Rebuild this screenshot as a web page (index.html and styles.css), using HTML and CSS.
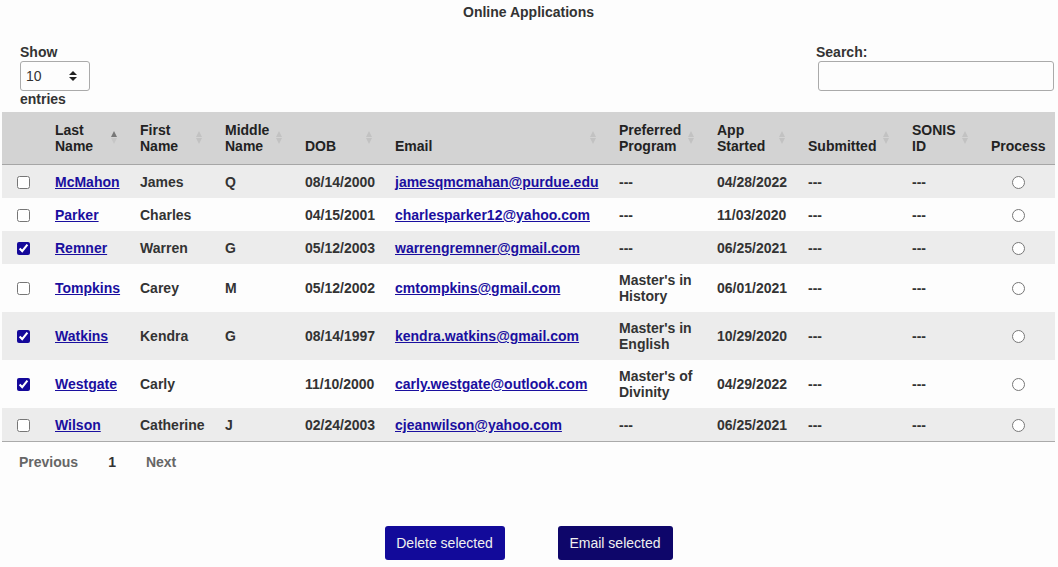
FILE: index.html
```html
<!DOCTYPE html>
<html lang="en">
<head>
<meta charset="utf-8">
<title>Online Applications</title>
<link rel="stylesheet" href="styles.css">
</head>
<body>
<div class="page">
  <h1 class="title">Online Applications</h1>

  <div class="controls">
    <div class="length">
      <div class="lbl">Show</div>
      <div class="select-wrap">
        <select class="select"><option>10</option><option>25</option><option>50</option></select>
        <svg class="select-arrows" width="8" height="12" viewBox="0 0 8 12"><path d="M0 5L4 1L8 5Z M0 7L4 11L8 7Z" fill="#222"/></svg>
      </div>
      <div class="lbl">entries</div>
    </div>
    <div class="search">
      <div class="lbl">Search:</div>
      <input class="search-input" type="search">
    </div>
  </div>

  <table class="grid">
    <colgroup>
      <col class="c-chk"><col class="c-last"><col class="c-first"><col class="c-mid"><col class="c-dob"><col class="c-email"><col class="c-prog"><col class="c-app"><col class="c-sub"><col class="c-sonis"><col class="c-proc">
    </colgroup>
    <thead>
      <tr>
        <th></th>
        <th class="sort">Last<br>Name<span class="arrows active"><i class="up"></i><i class="dn"></i></span></th>
        <th class="sort">First<br>Name<span class="arrows"><i class="up"></i><i class="dn"></i></span></th>
        <th class="sort">Middle<br>Name<span class="arrows"><i class="up"></i><i class="dn"></i></span></th>
        <th class="sort">DOB<span class="arrows"><i class="up"></i><i class="dn"></i></span></th>
        <th class="sort">Email<span class="arrows"><i class="up"></i><i class="dn"></i></span></th>
        <th class="sort">Preferred<br>Program<span class="arrows"><i class="up"></i><i class="dn"></i></span></th>
        <th class="sort">App<br>Started<span class="arrows"><i class="up"></i><i class="dn"></i></span></th>
        <th class="sort">Submitted<span class="arrows"><i class="up"></i><i class="dn"></i></span></th>
        <th class="sort">SONIS<br>ID<span class="arrows"><i class="up"></i><i class="dn"></i></span></th>
        <th>Process</th>
      </tr>
    </thead>
    <tbody>
      <tr class="odd one">
        <td class="chk"><input type="checkbox"></td>
        <td><a href="#">McMahon</a></td><td>James</td><td>Q</td><td>08/14/2000</td>
        <td><a href="#">jamesqmcmahan@purdue.edu</a></td><td>---</td><td>04/28/2022</td><td>---</td><td>---</td>
        <td class="proc"><input type="radio" name="p1"></td>
      </tr>
      <tr class="one">
        <td class="chk"><input type="checkbox"></td>
        <td><a href="#">Parker</a></td><td>Charles</td><td></td><td>04/15/2001</td>
        <td><a href="#">charlesparker12@yahoo.com</a></td><td>---</td><td>11/03/2020</td><td>---</td><td>---</td>
        <td class="proc"><input type="radio" name="p2"></td>
      </tr>
      <tr class="odd one">
        <td class="chk"><input type="checkbox" checked></td>
        <td><a href="#">Remner</a></td><td>Warren</td><td>G</td><td>05/12/2003</td>
        <td><a href="#">warrengremner@gmail.com</a></td><td>---</td><td>06/25/2021</td><td>---</td><td>---</td>
        <td class="proc"><input type="radio" name="p3"></td>
      </tr>
      <tr>
        <td class="chk"><input type="checkbox"></td>
        <td><a href="#">Tompkins</a></td><td>Carey</td><td>M</td><td>05/12/2002</td>
        <td><a href="#">cmtompkins@gmail.com</a></td><td>Master's in History</td><td>06/01/2021</td><td>---</td><td>---</td>
        <td class="proc"><input type="radio" name="p4"></td>
      </tr>
      <tr class="odd">
        <td class="chk"><input type="checkbox" checked></td>
        <td><a href="#">Watkins</a></td><td>Kendra</td><td>G</td><td>08/14/1997</td>
        <td><a href="#">kendra.watkins@gmail.com</a></td><td>Master's in English</td><td>10/29/2020</td><td>---</td><td>---</td>
        <td class="proc"><input type="radio" name="p5"></td>
      </tr>
      <tr>
        <td class="chk"><input type="checkbox" checked></td>
        <td><a href="#">Westgate</a></td><td>Carly</td><td></td><td>11/10/2000</td>
        <td><a href="#">carly.westgate@outlook.com</a></td><td>Master's of Divinity</td><td>04/29/2022</td><td>---</td><td>---</td>
        <td class="proc"><input type="radio" name="p6"></td>
      </tr>
      <tr class="odd one">
        <td class="chk"><input type="checkbox"></td>
        <td><a href="#">Wilson</a></td><td>Catherine</td><td>J</td><td>02/24/2003</td>
        <td><a href="#">cjeanwilson@yahoo.com</a></td><td>---</td><td>06/25/2021</td><td>---</td><td>---</td>
        <td class="proc"><input type="radio" name="p7"></td>
      </tr>
    </tbody>
  </table>

  <div class="pager">
    <span class="pg disabled">Previous</span>
    <span class="pg current">1</span>
    <span class="pg disabled">Next</span>
  </div>

  <div class="actions">
    <button class="btn btn-delete">Delete selected</button>
    <button class="btn btn-email">Email selected</button>
  </div>
</div>
</body>
</html>
```

FILE: styles.css
```css
* { box-sizing: border-box; }
html, body { margin: 0; padding: 0; background: #fdfdfd; }
body {
  font-family: "Liberation Sans", Arial, sans-serif;
  font-size: 14px;
  line-height: 16px;
  color: #333;
}
.page { padding: 0 3px 0 2px; }

.title {
  margin: 0;
  padding-top: 4px;
  font-size: 14px;
  line-height: 16px;
  font-weight: bold;
  text-align: center;
  color: #333;
}

.controls {
  display: flex;
  justify-content: space-between;
  align-items: flex-start;
  margin-top: 24px;
  padding: 0 1px 0 18px;
}
.lbl { font-weight: bold; line-height: 16px; }
.length { display: flex; flex-direction: column; align-items: flex-start; }
.select-wrap { position: relative; width: 70px; height: 30px; margin-top: 1px; }
.select {
  appearance: none;
  -webkit-appearance: none;
  width: 70px;
  height: 30px;
  border: 1px solid #aaa;
  border-radius: 3px;
  background: #fdfdfd;
  font-family: "Liberation Sans", Arial, sans-serif;
  font-size: 14px;
  color: #333;
  padding: 0 0 0 5px;
}
.select-arrows { position: absolute; right: 13px; top: 9px; pointer-events: none; }

.search { width: 238px; }
.search-input {
  display: block;
  margin: 1px 0 0 2px;
  width: 236px;
  height: 30px;
  border: 1px solid #aaa;
  border-radius: 3px;
  background: #fdfdfd;
}

.grid {
  width: 1053px;
  margin-top: 5px;
  border-collapse: collapse;
  table-layout: fixed;
}
.c-chk { width: 43px; }
.c-last { width: 85px; }
.c-first { width: 85px; }
.c-mid { width: 80px; }
.c-dob { width: 90px; }
.c-email { width: 224px; }
.c-prog { width: 98px; }
.c-app { width: 91px; }
.c-sub { width: 104px; }
.c-sonis { width: 79px; }
.c-proc { width: 74px; }

.grid thead th {
  background: #d3d3d3;
  text-align: left;
  vertical-align: bottom;
  font-weight: bold;
  color: #222;
  padding: 10px 18px 10px 10px;
  height: 52px;
  border-bottom: 1px solid #a6a6a6;
  position: relative;
  white-space: nowrap;
}
.grid thead th:last-child { padding-right: 6px; }

.arrows {
  position: absolute;
  right: 12px;
  top: 50%;
  margin-top: -7px;
  width: 7px;
  height: 13px;
}
.arrows i {
  position: absolute;
  left: 0;
  width: 0;
  height: 0;
  border-left: 3.5px solid transparent;
  border-right: 3.5px solid transparent;
}
.arrows .up { top: 0; border-bottom: 6px solid #c2c2c2; }
.arrows .dn { bottom: 0; border-top: 6px solid #c2c2c2; }
.arrows.active .up { border-bottom-color: #777; }
.arrows.active .dn { border-top-color: #c6c6c6; }

.grid tbody tr.odd td { background: #ececec; }
.grid tbody tr:last-child td { border-bottom: 1px solid #aaa; }
.grid tbody td {
  padding: 8px 10px;
  font-weight: bold;
  color: #333;
  vertical-align: middle;
}
.grid tbody tr.one td { padding-top: 9px; padding-bottom: 8px; }
.grid a { color: #1a0f9f; text-decoration: underline; }
.grid tbody td.chk { padding: 0 0 0 10px; }
.grid td.chk input { margin: 0 0 0 5px; width: 13px; height: 13px; accent-color: #14089a; display: block; }
.grid tbody td.proc { text-align: center; padding: 0; }
.grid td.proc input { margin: 0 auto; width: 13px; height: 13px; display: block; }

.pager {
  display: flex;
  padding: 12px 0 0 2px;
}
.pg { padding: 0 15px; font-weight: bold; line-height: 16px; }
.pg.disabled { color: #666; }
.pg.current { color: #333; }

.actions {
  display: flex;
  justify-content: center;
  gap: 53px;
  margin-top: 56px;
}
.btn {
  height: 34px;
  border: none;
  border-radius: 3px;
  font-family: "Liberation Sans", Arial, sans-serif;
  font-size: 14px;
  color: #f0f0f0;
  padding: 0;
  white-space: nowrap;
}
.btn-delete { background: #120a9a; width: 120px; }
.btn-email { background: #0e066a; width: 115px; }
```
